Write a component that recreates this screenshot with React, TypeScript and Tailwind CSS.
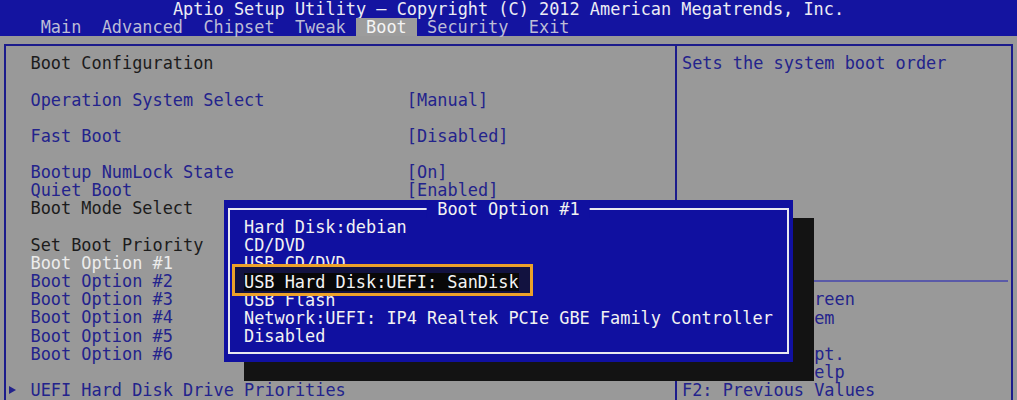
import React from 'react';

type Row = { t?: string; v?: string; c?: 'dark' | 'blue' | 'white'; arrow?: boolean };

const leftRows: Row[] = [
  { t: 'Boot Configuration', c: 'dark' },
  {},
  { t: 'Operation System Select', v: '[Manual]', c: 'blue' },
  {},
  { t: 'Fast Boot', v: '[Disabled]', c: 'blue' },
  {},
  { t: 'Bootup NumLock State', v: '[On]', c: 'blue' },
  { t: 'Quiet Boot', v: '[Enabled]', c: 'blue' },
  { t: 'Boot Mode Select', c: 'dark' },
  {},
  { t: 'Set Boot Priority', c: 'dark' },
  { t: 'Boot Option #1', c: 'white' },
  { t: 'Boot Option #2', c: 'blue' },
  { t: 'Boot Option #3', c: 'blue' },
  { t: 'Boot Option #4', c: 'blue' },
  { t: 'Boot Option #5', c: 'blue' },
  { t: 'Boot Option #6', c: 'blue' },
  {},
  { t: 'UEFI Hard Disk Drive Priorities', c: 'blue', arrow: true },
];

const colorOf = (c?: string) =>
  c === 'dark' ? 'text-[#1c1c1c]' : c === 'white' ? 'text-[#ececec]' : 'text-[#23238c]';

const helpLines = [
  '→←: Select Screen',
  '↑↓: Select Item',
  'Enter: Select',
  '+/-: Change Opt.',
  'F1: General Help',
  'F2: Previous Values',
];

const popupItems = [
  'Hard Disk:debian',
  'CD/DVD',
  'USB CD/DVD',
  'USB Hard Disk:UEFI: SanDisk',
  'USB Flash',
  'Network:UEFI: IP4 Realtek PCIe GBE Family Controller',
  'Disabled',
];

export default function App() {
  return (
    <div className="relative w-[1017px] h-[400px] overflow-hidden bg-[#999999] font-['DejaVu_Sans_Mono',monospace] text-[16.9px] leading-[18.17px]">
      <header className="bg-[#1414a0] h-[36.34px]">
        <div className="h-[18.17px] text-center text-[#ececf4] whitespace-pre">
          Aptio Setup Utility – Copyright (C) 2012 American Megatrends, Inc.
        </div>
        <div className="h-[18.17px] pl-[40.68px] flex whitespace-pre text-[#bcbcd6]">
          <span>Main  Advanced  Chipset  Tweak </span>
          <span className="bg-[#9c9c9c] text-[#f4f4f4]"> Boot </span>
          <span> Security  Exit</span>
        </div>
      </header>

      <div className="pt-[7.7px] pl-[4px]">
        <div className="flex w-[1009px] h-[400px] border-l-2 border-r-2 border-t-2 border-[#1c1c8c]">
          <div className="w-[671px] border-r-2 border-[#1c1c8c] pt-[8.2px]">
            {leftRows.map((r, i) => (
              <div key={i} className={`h-[18.17px] flex items-center whitespace-pre ${colorOf(r.c)}`}>
                {r.arrow ? (
                  <svg width="7" height="8" viewBox="0 0 7 8" className="ml-[2.5px] mr-[15px]">
                    <path d="M0 0 L7 4 L0 8 Z" fill="#23238c" />
                  </svg>
                ) : (
                  <span className="w-[24.5px]" />
                )}
                {r.t && <span className="w-[376.3px]">{r.t}</span>}
                {r.v && <span>{r.v}</span>}
              </div>
            ))}
          </div>
          <div className="flex-1 pt-[8.2px] text-[#23238c]">
            <div className="h-[18.17px] pl-[5px] whitespace-pre">Sets the system boot order</div>
            <div className="h-[199.87px]" />
            <div className="h-[18.17px] flex items-center ml-[2px] mr-[3px]">
              <div className="w-full h-[2px] bg-[#5a5aa8]" />
            </div>
            {helpLines.map((l) => (
              <div key={l} className="h-[18.17px] pl-[5px] whitespace-pre">
                {l}
              </div>
            ))}
          </div>
        </div>
      </div>

      {/* popup shadow */}
      <div className="absolute left-[244px] top-[218px] w-[569.5px] h-[162.5px] bg-[#131313]" />

      {/* popup */}
      <div className="absolute left-[223.7px] top-[199.9px] w-[569.5px] h-[162.5px] bg-[#1010a0] text-[#f2f2f2]">
        <div className="absolute left-[4px] right-[4px] top-[8.3px] bottom-[8.3px] border-2 border-[#e8e8f0]" />
        <div className="absolute top-0 left-1/2 -translate-x-1/2 h-[18.17px] bg-[#1010a0] whitespace-pre">
          {' Boot Option #1 '}
        </div>
        <div className="relative pt-[18.17px] pl-[20.34px]">
          {popupItems.map((it) => (
            <div key={it} className="h-[18.17px] whitespace-pre">
              {it}
            </div>
          ))}
        </div>
      </div>

      {/* orange annotation */}
      <div className="absolute left-[231.7px] top-[264px] w-[301.5px] h-[31.5px] border-[3px] border-[#eca12a] bg-[#121240]">
        <div className="mt-[5.6px] ml-[9.3px] inline-block align-top bg-[#080808] text-[#f4f4f4] h-[18.17px] whitespace-pre">
          USB Hard Disk:UEFI: SanDisk
        </div>
      </div>
    </div>
  );
}
